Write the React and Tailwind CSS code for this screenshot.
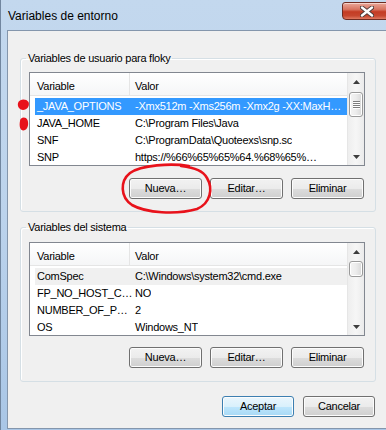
import React from 'react'

const userVars = [
    ['_JAVA_OPTIONS', '-Xmx512m -Xms256m -Xmx2g -XX:MaxH…'],
    ['JAVA_HOME', 'C:\\Program Files\\Java'],
    ['SNF', 'C:\\ProgramData\\Quoteexs\\snp.sc'],
    ['SNP', 'https://%66%65%65%64.%68%65%…'],
]

const systemVars = [
    ['ComSpec', 'C:\\Windows\\system32\\cmd.exe'],
    ['FP_NO_HOST_C…', 'NO'],
    ['NUMBER_OF_P…', '2'],
    ['OS', 'Windows_NT'],
]

function Arrow({ down = false }) {
    return (
        <div className="flex h-[17px] items-center justify-center">
            <svg width="7" height="4" viewBox="0 0 7 4">
                <polygon points={down ? '0,0 7,0 3.5,4' : '3.5,0 7,4 0,4'} fill="#3d3d3d" />
            </svg>
        </div>
    )
}

function ScrollBar({ offset, size }) {
    return (
        <div className="flex w-[17px] flex-col border-l border-[#e6e6e6] bg-gradient-to-r from-[#eeeeee] via-[#f6f6f6] to-[#ebebeb]">
            <Arrow />
            <div
                className="mx-[1px] flex flex-col items-center justify-center gap-[1px] rounded-[3px] border border-[#9a9a9a] bg-gradient-to-r from-[#f4f4f4] via-[#ececec] to-[#d8d8d8] shadow-[inset_0_0_0_1px_#ffffff]"
                style={{ marginTop: offset, height: size }}
            >
                {size >= 20 && [0, 1, 2, 3].map((i) => (
                    <div key={i} className="h-px w-[7px] bg-[#7d7d7d] shadow-[0_1px_0_#ffffff]" />
                ))}
            </div>
            <div className="flex-1" />
            <Arrow down />
        </div>
    )
}

function VarList({ rows, selected, focused, thumbOffset, thumbSize }) {
    return (
        <div className="flex h-[94px] border border-[#828790] bg-white">
            <div className="min-w-0 flex-1 overflow-hidden">
                <div className="flex h-[23px] border-b border-[#e5e5e5] bg-gradient-to-b from-white to-[#f5f6f7] leading-[17px]">
                    <div className="w-[100px] border-r border-[#e5e5e5] pl-[7px] pt-[5px]">Variable</div>
                    <div className="pl-[5px] pt-[5px]">Valor</div>
                </div>
                <div className="pt-[2px]">
                    {rows.map(([name, value], i) => {
                        const isSel = i === selected
                        const bg = isSel ? (focused ? 'bg-[#3399ff] text-white' : 'bg-[#f0f0f0]') : ''
                        return (
                            <div key={name} className={`ml-[5px] flex h-[17px] items-center leading-[17px] ${bg}`}>
                                <div className="w-[94px] shrink-0 whitespace-nowrap pl-[2px]">{name}</div>
                                <div className="overflow-hidden whitespace-nowrap pl-[6px]">{value}</div>
                            </div>
                        )
                    })}
                </div>
            </div>
            <ScrollBar offset={thumbOffset} size={thumbSize} />
        </div>
    )
}

function WinButton({ children, primary = false, width = 'w-[73px]' }) {
    const look = primary
        ? 'border-[#3c7fb1] bg-[linear-gradient(#eaf6fd_0%,#d9f0fc_50%,#bee6fd_50%,#a7d9f5_100%)]'
        : 'border-[#707070] bg-[linear-gradient(#f2f2f2_0%,#ebebeb_50%,#dddddd_50%,#cfcfcf_100%)]'
    return (
        <button className={`${width} h-[21px] rounded-[3px] border text-[11px] leading-[17px] text-black shadow-[inset_0_0_0_1px_#fcfcfc] ${look}`}>
            {children}
        </button>
    )
}

function GroupBox({ title, children, className = '' }) {
    return (
        <fieldset className={`w-[356px] rounded-[3px] border border-[#d5dfe5] p-0 shadow-[inset_1px_1px_0_#ffffff] ${className}`}>
            <legend className="ml-[5px] px-[2px] leading-[14px]">{title}</legend>
            {children}
        </fieldset>
    )
}

function ButtonRow() {
    return (
        <div className="mr-[1px] flex justify-end gap-[8px]">
            <WinButton>Nueva…</WinButton>
            <WinButton>Editar…</WinButton>
            <WinButton>Eliminar</WinButton>
        </div>
    )
}

export default function App() {
    return (
        <div className="relative h-[430px] w-[386px] overflow-hidden border-l border-[#71869f] bg-gradient-to-b from-[#c3d8ee] via-[#bcd3ec] to-[#a9c6e6] font-['Liberation_Sans',Arial,sans-serif] text-[11px] tracking-[-0.25px] text-black">
            {/* Barra de título */}
            <div className="flex h-[30px] items-start">
                <span className="ml-[7px] mt-[9px] text-[12px] leading-[14px] tracking-normal">Variables de entorno</span>
                <div className="ml-auto mr-[-6px] mt-[2px] flex h-[18px] w-[50px] items-center justify-center rounded-bl-[4px] rounded-tl-[3px] border border-[#6e2c22] bg-[linear-gradient(#eaa89a_0%,#d87561_40%,#c43c24_55%,#c6472f_80%,#e07a62_100%)] shadow-[inset_0_1px_0_#f6d2c9]">
                    <svg width="14" height="11" viewBox="0 0 14 11">
                        <path d="M2 1.5 L12 9.5 M12 1.5 L2 9.5" stroke="#4a3a38" strokeWidth="4.2" strokeLinecap="round" />
                        <path d="M2 1.5 L12 9.5 M12 1.5 L2 9.5" stroke="#ffffff" strokeWidth="2.4" strokeLinecap="round" />
                    </svg>
                </div>
            </div>

            {/* Área cliente */}
            <div className="ml-[6px] h-[399px] w-[385px] border-b border-l border-t border-[#8496ac] bg-[#f0f0f0] pl-[12px] pt-[20px]">
                <GroupBox title="Variables de usuario para floky">
                    <div className="pb-[12px] pl-[8px] pr-[10px]">
                        <div className="mt-[7px]">
                            <VarList rows={userVars} selected={0} focused thumbOffset={2} thumbSize={25} />
                        </div>
                        <div className="mt-[12px]">
                            <ButtonRow />
                        </div>
                    </div>
                </GroupBox>

                <GroupBox title="Variables del sistema" className="mt-[8px]">
                    <div className="pb-[13px] pl-[8px] pr-[10px]">
                        <div className="mt-[8px]">
                            <VarList rows={systemVars} selected={0} thumbOffset={1} thumbSize={16} />
                        </div>
                        <div className="mt-[11px]">
                            <ButtonRow />
                        </div>
                    </div>
                </GroupBox>

                <div className="mt-[14px] flex w-[356px] justify-end gap-[9px] pr-[1px]">
                    <WinButton primary width="w-[72px]">Aceptar</WinButton>
                    <WinButton width="w-[72px]">Cancelar</WinButton>
                </div>
            </div>

            {/* Marcas rojas a mano */}
            <svg className="pointer-events-none absolute left-0 top-0" width="386" height="430" viewBox="0 0 386 430">
                <path d="M17 103 C18 99, 25 98, 27.5 102 C29 106, 26 110, 22 110 C19 110, 16 107, 17 103 Z" fill="#e8121b" />
                <path d="M19 121 C19 117, 25 116, 26.5 120 C28 124, 27 130, 22.5 130.5 C19 130.5, 18 126, 19 121 Z" fill="#e8121b" />
                <path
                    d="M188 166 C170 163, 140 165, 129 173 C119 181, 119 197, 131 205 C145 213, 175 215, 196 209 C210 203, 212 188, 206 178 C202 171, 195 168, 180 166"
                    fill="none"
                    stroke="#e8121b"
                    strokeWidth="2.6"
                    strokeLinecap="round"
                />
            </svg>
        </div>
    )
}
